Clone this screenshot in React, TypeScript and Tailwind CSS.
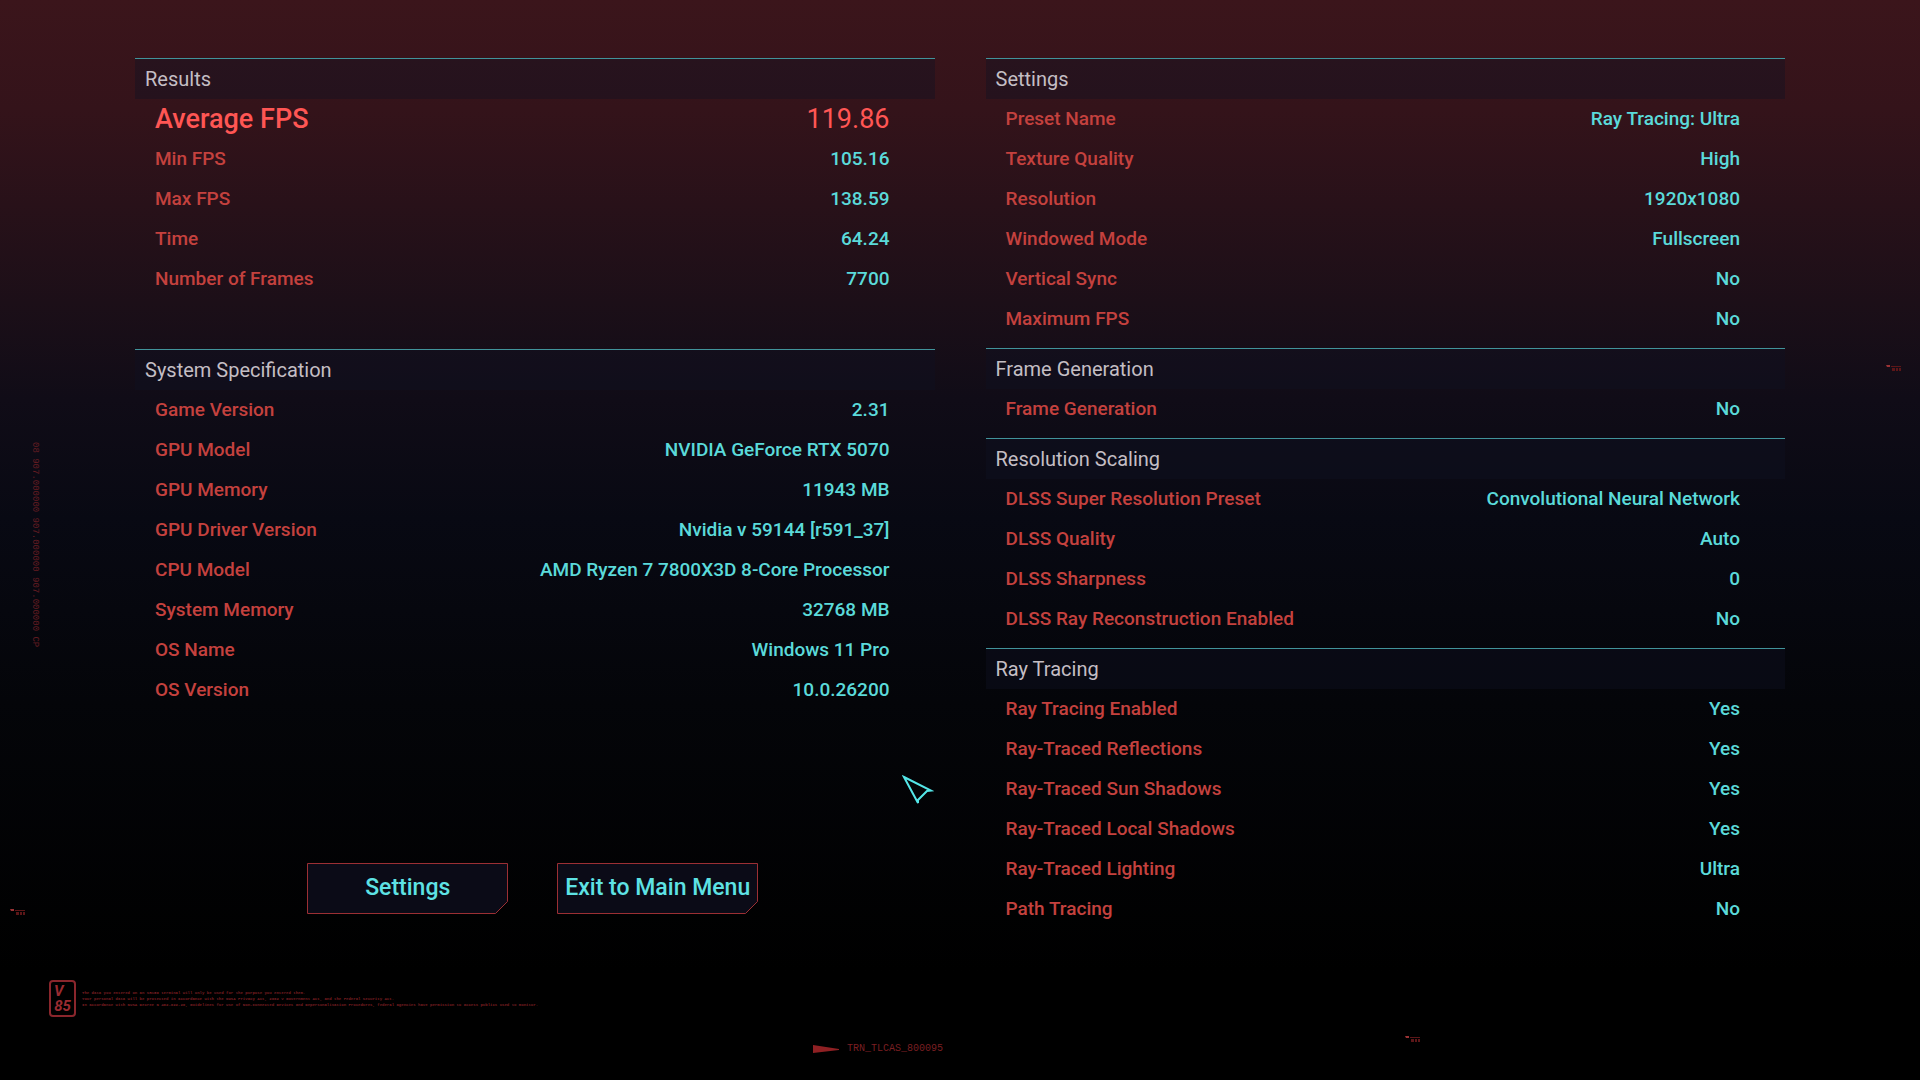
import type { ReactNode } from "react";

type Row = { label: string; value: string; highlight?: boolean };

const results: Row[] = [
    { label: "Average FPS", value: "119.86", highlight: true },
    { label: "Min FPS", value: "105.16" },
    { label: "Max FPS", value: "138.59" },
    { label: "Time", value: "64.24" },
    { label: "Number of Frames", value: "7700" },
];

const system: Row[] = [
    { label: "Game Version", value: "2.31" },
    { label: "GPU Model", value: "NVIDIA GeForce RTX 5070" },
    { label: "GPU Memory", value: "11943 MB" },
    { label: "GPU Driver Version", value: "Nvidia v 59144 [r591_37]" },
    { label: "CPU Model", value: "AMD Ryzen 7 7800X3D 8-Core Processor" },
    { label: "System Memory", value: "32768 MB" },
    { label: "OS Name", value: "Windows 11 Pro" },
    { label: "OS Version", value: "10.0.26200" },
];

const settings: Row[] = [
    { label: "Preset Name", value: "Ray Tracing: Ultra" },
    { label: "Texture Quality", value: "High" },
    { label: "Resolution", value: "1920x1080" },
    { label: "Windowed Mode", value: "Fullscreen" },
    { label: "Vertical Sync", value: "No" },
    { label: "Maximum FPS", value: "No" },
];

const frameGeneration: Row[] = [{ label: "Frame Generation", value: "No" }];

const scaling: Row[] = [
    { label: "DLSS Super Resolution Preset", value: "Convolutional Neural Network" },
    { label: "DLSS Quality", value: "Auto" },
    { label: "DLSS Sharpness", value: "0" },
    { label: "DLSS Ray Reconstruction Enabled", value: "No" },
];

const rayTracing: Row[] = [
    { label: "Ray Tracing Enabled", value: "Yes" },
    { label: "Ray-Traced Reflections", value: "Yes" },
    { label: "Ray-Traced Sun Shadows", value: "Yes" },
    { label: "Ray-Traced Local Shadows", value: "Yes" },
    { label: "Ray-Traced Lighting", value: "Ultra" },
    { label: "Path Tracing", value: "No" },
];

function Section({ title, rows }: { title: string; rows: Row[] }) {
    return (
        <section>
            <h2 className="h-[41px] border-t border-[#41939a] bg-[#101222]/40 pl-[10px] text-[20px] leading-[40px] text-[#c4bec4]">
                {title}
            </h2>
            <table className="w-full">
                <tbody>
                    {rows.map((row) => (
                        <tr key={row.label} className="h-10">
                            <th
                                scope="row"
                                className={
                                    row.highlight
                                        ? "pl-5 text-left text-[27px] leading-[36px] font-medium text-[#ff5654]"
                                        : "pl-5 text-left text-[19px] leading-[36px] font-medium text-[#c4413e]"
                                }
                            >
                                {row.label}
                            </th>
                            <td
                                className={
                                    row.highlight
                                        ? "pr-[45px] text-right text-[27px] leading-[36px] text-[#ff5654]"
                                        : "pr-[45px] text-right text-[19px] leading-[36px] font-medium text-[#5bdada]"
                                }
                            >
                                {row.value}
                            </td>
                        </tr>
                    ))}
                </tbody>
            </table>
        </section>
    );
}

function MenuButton({ children }: { children: ReactNode }) {
    return (
        <button type="button" className="relative h-[51px] w-[201px] text-[23px] font-medium whitespace-nowrap text-[#5ee2e4]">
            <svg viewBox="0 0 201 51" className="absolute inset-0 h-full w-full" aria-hidden="true">
                <path d="M.5 .5H200.500V38.500L188.500 50.500H.5Z" fill="#0b0b17" stroke="#9c2f34" />
            </svg>
            <span className="relative">{children}</span>
        </button>
    );
}

// tiny HUD tick with an unreadable tag next to it
function Mark({ className }: { className: string }) {
    return (
        <svg viewBox="0 0 18 8" className={`absolute h-2 w-[18px] ${className}`} aria-hidden="true">
            <path d="M0 1h4v2H1z" fill="#9a3234" />
            <path d="M5 2h10v1H5zM6 4h3v3H6zM10 4h2v3h-2zM13 4h2v3h-2z" fill="#5c1618" />
        </svg>
    );
}

export default function App() {
    return (
        <div className="relative flex min-h-screen flex-col overflow-hidden bg-black bg-[linear-gradient(to_bottom,#3b151b_0%,#34131a_10%,#1c0f18_28%,#100c17_37%,#080913_48%,#040509_65%,#000_90%)] font-['Roboto','Liberation_Sans',sans-serif]">
            <main className="grid grid-cols-2 gap-[51px] px-[135px] pt-[58px]">
                <div>
                    <Section title="Results" rows={results} />
                    <div className="mt-[50px]">
                        <Section title="System Specification" rows={system} />
                    </div>
                    <div className="mt-[153px] flex justify-center gap-[49px] pr-1">
                        <MenuButton>Settings</MenuButton>
                        <MenuButton>Exit to Main Menu</MenuButton>
                    </div>
                </div>
                <div className="flex flex-col gap-[9px]">
                    <Section title="Settings" rows={settings} />
                    <Section title="Frame Generation" rows={frameGeneration} />
                    <Section title="Resolution Scaling" rows={scaling} />
                    <Section title="Ray Tracing" rows={rayTracing} />
                </div>
            </main>

            <footer className="mt-[51px] font-['Liberation_Mono',monospace] text-[#7a1f22]">
                <div className="flex items-center gap-[6px] pl-[49px]">
                    <div className="flex h-[37px] w-[27px] flex-col items-center justify-center rounded border-2 border-[#8a262c] font-['Roboto','Liberation_Sans',sans-serif] text-[15px] leading-[15px] font-bold text-[#9a2b30] italic">
                        <span className="w-full pl-[3px]">V</span>
                        <span>85</span>
                    </div>
                    <div className="text-[4px] leading-[6px] font-bold whitespace-nowrap">
                        <p>The data you entered on an SR150 terminal will only be used for the purpose you entered them.</p>
                        <p>Your personal data will be protected in accordance with the NUSA Privacy Act, 2062 V Government Act, and the Federal Security Act.</p>
                        <p>In accordance with NUSA Decree N 462-022-20, Guidelines for Use of Non-Connected Devices and Depersonalisation Procedures, federal agencies have permission to access publics used to monitor.</p>
                    </div>
                </div>
                <div className="mt-6 flex items-center justify-center gap-2 pr-[164px] text-[10px] leading-4">
                    <svg viewBox="0 0 26 8" className="h-2 w-[26px]" aria-hidden="true">
                        <path d="M0 0L26 4V5L0 8Z" fill="#8f2023" />
                    </svg>
                    <span>TRN_TLCAS_800095</span>
                </div>
            </footer>

            <p className="absolute top-[442px] left-[30px] font-['Liberation_Mono',monospace] text-[9px] leading-[10px] whitespace-nowrap text-[#641c22] [writing-mode:vertical-rl]">
                08 907.000000 907.000000 907.000000 CP
            </p>
            <Mark className="top-[908px] left-[10px]" />
            <Mark className="top-[364px] left-[1886px]" />
            <Mark className="top-[1035px] left-[1405px]" />

            <svg viewBox="0 0 32 32" className="absolute top-[774px] left-[902px] h-8 w-8" aria-hidden="true">
                <path d="M2 3L29 16.500L25 17L16 26V29Z" fill="none" stroke="#54e6e8" strokeWidth="2" />
            </svg>
        </div>
    );
}
